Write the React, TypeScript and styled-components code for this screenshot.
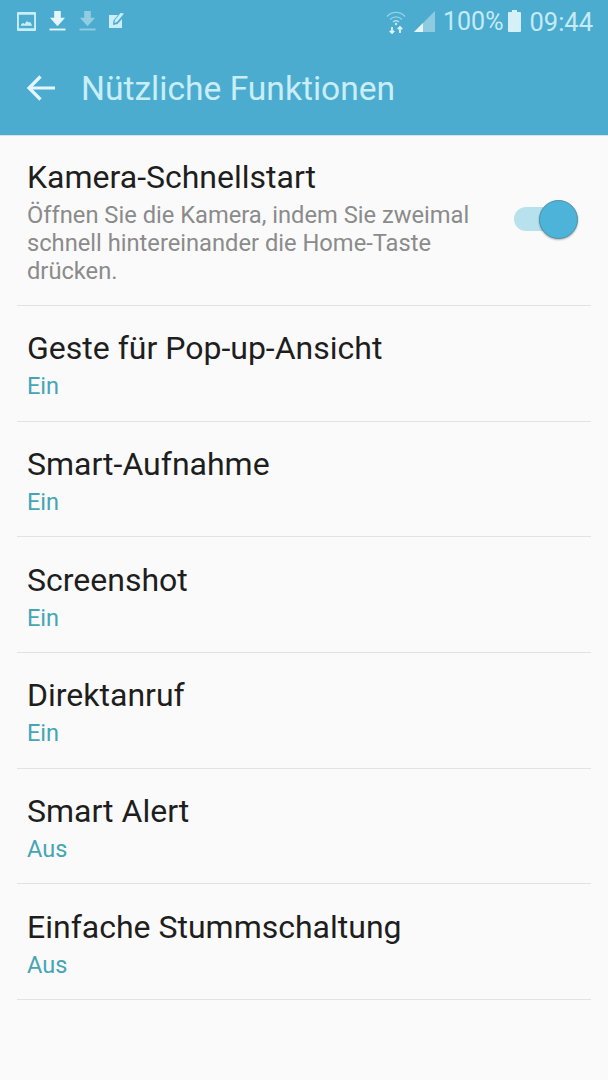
import { createGlobalStyle } from "styled-components";
import styled from "styled-components";

const GlobalStyle = createGlobalStyle`
  html, body {
    margin: 0;
    padding: 0;
    background: #fafafa;
    font-family: Roboto, "Liberation Sans", sans-serif;
  }
`;

const Screen = styled.div`
  width: 608px;
  height: 1080px;
  overflow: hidden;
  background: #fafafa;
`;

const Header = styled.header`
  height: 136px;
  background: #4bacd0;
  border-bottom: 1px solid #d5e4ea;
  box-sizing: border-box;
`;

const StatusBar = styled.div`
  height: 42px;
  display: flex;
  align-items: center;
  justify-content: space-between;
  padding: 0 15px 0 17px;
`;

const StatusGroup = styled.div`
  display: flex;
  align-items: center;
`;

const NotifIcons = styled(StatusGroup)`
  gap: 13px;
`;

const SignalIcons = styled(StatusGroup)`
  gap: 8px;
  margin-right: 8px;
`;

const StatusText = styled.span<{ $gap?: number }>`
  font-size: 25.5px;
  color: #c5ebf5;
  line-height: 30px;
  padding-top: 2px;
  margin-left: ${(p) => p.$gap ?? 0}px;
`;

const PercentText = styled(StatusText)`
  font-size: 25px;
  margin-right: 5px;
`;

const TitleBar = styled.div`
  height: 93px;
  display: flex;
  align-items: center;
  padding: 0 0 1px 27px;
  box-sizing: border-box;
`;

const Title = styled.h1`
  margin: 0 0 0 26px;
  font-size: 33.6px;
  font-weight: 400;
  color: #c9eef7;
`;

const List = styled.div`
  padding: 0 17px;
`;

const Row = styled.div<{ $tall?: boolean }>`
  height: ${(p) => (p.$tall ? "170px" : "115.700px")};
  box-sizing: border-box;
  border-bottom: 1.5px solid #e2e2e2;
  padding: ${(p) => (p.$tall ? "21px" : "22.400px")} 10px 0;
  display: flex;
  justify-content: space-between;
`;

const RowTitle = styled.div`
  font-size: 32px;
  line-height: 40px;
  color: #1e1e1e;
  white-space: nowrap;
`;

const RowDescription = styled.div`
  font-size: 23.700px;
  line-height: 28px;
  margin-top: 4px;
  color: #8b8b8b;
  width: 450px;
`;

const RowValue = styled.div`
  font-size: 23.500px;
  line-height: 28px;
  margin-top: 4px;
  color: #45a5b5;
`;

const TextBlock = styled.div`
  flex-shrink: 0;
`;

const Switch = styled.div`
  position: relative;
  width: 56px;
  height: 24px;
  margin: 50px 11px 0 0;
  flex-shrink: 0;
  border-radius: 12px;
  background: #b8e1ee;
`;

const SwitchKnob = styled.div`
  position: absolute;
  top: -7px;
  right: -8px;
  width: 39px;
  height: 39px;
  box-sizing: border-box;
  border-radius: 50%;
  background: #4eb3d9;
  border: 1px solid #4a93ad;
  box-shadow: 0 1px 2px rgba(0, 0, 0, 0.3);
`;

const ImageIcon = () => (
  <svg width="19" height="19" viewBox="0 0 20 20">
    <path fill="#c9eef7" fillRule="evenodd" d="M1 0h18a1 1 0 0 1 1 1v18a1 1 0 0 1-1 1H1a1 1 0 0 1-1-1V1a1 1 0 0 1 1-1zm1 3v14h16V3z" />
    <path fill="#c9eef7" d="M4 14.500c.5-2 1.500-3 2.500-3l1.500 1 2.500-3 2 1.500 1.500-.5 2 4z" />
  </svg>
);

const DownloadIcon = ({ faded }: { faded?: boolean }) => (
  <svg width="17" height="20" viewBox="0 0 18 21" opacity={faded ? 0.45 : 1}>
    <path fill="#e4f6fb" d="M5.500 0h7v7H17l-8 9-8-9h4.500z" />
    <rect x="0.500" y="18.500" width="17" height="2" fill="#e4f6fb" />
  </svg>
);

const NoteIcon = () => (
  <svg width="16" height="16" viewBox="0 0 16 16">
    <path fill="#c9eef7" d="M0 2h9L4.500 7.500 4 12l4.500-1L13 6v9H0z" />
    <path fill="#c9eef7" d="M11.500 0 15 0.500 8 9l-2.500 1 .5-3z" />
  </svg>
);

const WifiIcon = () => (
  <svg width="20" height="25" viewBox="0 0 20 25" fill="none" stroke="#c5ebf5">
    <path strokeWidth="1.300" opacity="0.6" d="M1 7.500c5-5.500 13-5.500 18 0" />
    <path strokeWidth="1.300" opacity="0.6" d="M4 10.500c3.500-3.500 8.500-3.500 12 0" />
    <path strokeWidth="1.500" opacity="0.8" d="M7 13c1.800-1.500 4.200-1.500 6 0" />
    <circle cx="10" cy="15" r="1.200" fill="#c5ebf5" stroke="none" />
    <path strokeWidth="1.700" stroke="#e4f6fb" d="M6 18v6M3.800 21.800 6 24l2.200-2.200M14 24v-6M11.800 20.200 14 18l2.200 2.200" />
  </svg>
);

const SignalIcon = () => (
  <svg width="21" height="21" viewBox="0 0 21 21">
    <path fill="#8fcbe0" d="M21 0v21H0z" />
    <path fill="#e4f6fb" d="M9 12v9H0z" />
  </svg>
);

const BatteryIcon = () => (
  <svg width="13" height="22" viewBox="0 0 13 22">
    <path fill="#d5f0f7" d="M4 0h5v2h3a1 1 0 0 1 1 1v18a1 1 0 0 1-1 1H1a1 1 0 0 1-1-1V3a1 1 0 0 1 1-1h3z" />
  </svg>
);

const BackArrow = () => (
  <svg width="28" height="26" viewBox="0 0 28 26" fill="none" stroke="#e4f6fb" strokeWidth="3.200">
    <path d="M28 13H2.500M13.500 1.500 2 13l11.500 11.500" />
  </svg>
);

const items = [
  { title: "Geste für Pop-up-Ansicht", value: "Ein" },
  { title: "Smart-Aufnahme", value: "Ein" },
  { title: "Screenshot", value: "Ein" },
  { title: "Direktanruf", value: "Ein" },
  { title: "Smart Alert", value: "Aus" },
  { title: "Einfache Stummschaltung", value: "Aus" },
];

export default function App() {
  return (
    <Screen>
      <GlobalStyle />
      <Header>
        <StatusBar>
          <NotifIcons>
            <ImageIcon />
            <DownloadIcon />
            <DownloadIcon faded />
            <NoteIcon />
          </NotifIcons>
          <StatusGroup>
            <SignalIcons>
              <WifiIcon />
              <SignalIcon />
            </SignalIcons>
            <PercentText>100%</PercentText>
            <BatteryIcon />
            <StatusText $gap={8}>09:44</StatusText>
          </StatusGroup>
        </StatusBar>
        <TitleBar>
          <BackArrow />
          <Title>Nützliche Funktionen</Title>
        </TitleBar>
      </Header>
      <List>
        <Row $tall>
          <TextBlock>
            <RowTitle>Kamera-Schnellstart</RowTitle>
            <RowDescription>
              Öffnen Sie die Kamera, indem Sie zweimal schnell hintereinander die Home-Taste drücken.
            </RowDescription>
          </TextBlock>
          <Switch>
            <SwitchKnob />
          </Switch>
        </Row>
        {items.map((item) => (
          <Row key={item.title}>
            <TextBlock>
              <RowTitle>{item.title}</RowTitle>
              <RowValue>{item.value}</RowValue>
            </TextBlock>
          </Row>
        ))}
      </List>
    </Screen>
  );
}
